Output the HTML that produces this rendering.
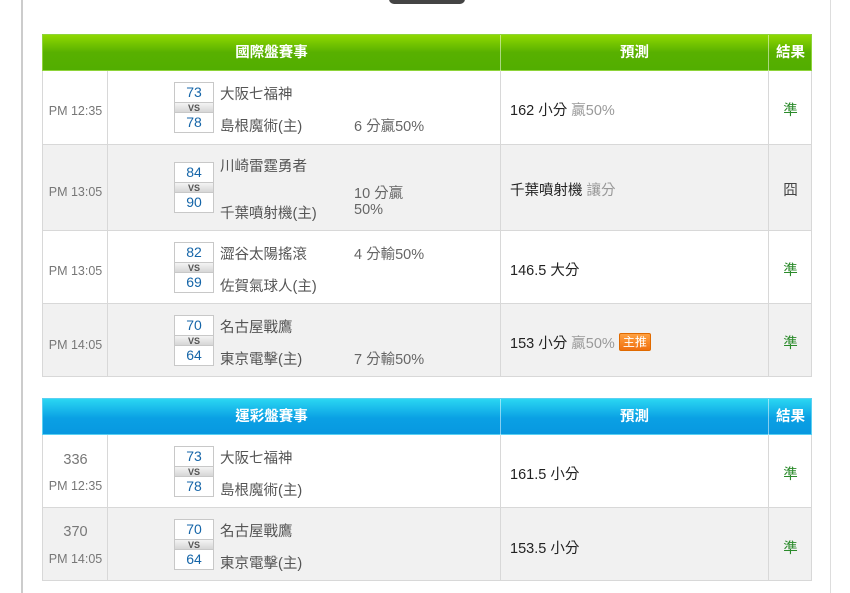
<!DOCTYPE html>
<html><head><meta charset="utf-8"><style>
*{margin:0;padding:0;box-sizing:border-box}
body{width:850px;height:593px;background:#fff;position:relative;overflow:hidden;font-family:"Liberation Sans","Noto Sans CJK TC",sans-serif;color:#555}
.a{position:absolute}
.hd{position:absolute;left:42px;width:770px;height:37px;color:#fff;font-weight:bold;font-size:14.5px}
.hd div{position:absolute;top:0;height:37px;line-height:37px;text-align:center;border-right:1px solid rgba(255,255,255,.5)}
.g{background:linear-gradient(#8fd800,#58b000 50%,#52ae00);border:1px solid #8ed43a}
.b{background:linear-gradient(#2ad6f2,#0aa0e4 55%,#0898e0);border:1px solid #5ad0f2}
.row{position:absolute;left:42px;width:770px;border:1px solid #d8d8d8;border-top:none}
.row>.c{position:absolute;top:0;bottom:0;border-right:1px solid #d8d8d8}
.t{font-size:12.5px;color:#777;text-align:center;width:65px}
.sb{position:absolute;left:131px;width:40px;border:1px solid #c8c8c8;background:#fff}
.sb .n{height:19px;line-height:19px;text-align:center;color:#1565a8;font-size:14px}
.sb .v{height:11px;line-height:11px;text-align:center;font-size:9px;font-weight:bold;color:#555;background:linear-gradient(#f4f4f4,#d6d6d6);border-top:1px solid #c8c8c8;border-bottom:1px solid #c8c8c8}
.nm{position:absolute;left:177px;font-size:14.5px;color:#555;white-space:nowrap}
.hc{position:absolute;left:311px;font-size:14.5px;color:#666;white-space:nowrap}
.pr{position:absolute;left:467px;font-size:14.5px;color:#222;white-space:nowrap}
.pr i{font-style:normal;color:#999}
.rs{position:absolute;left:726px;width:43px;text-align:center;font-size:14.5px}
.ok{color:#2a8a2a}
.tag{display:inline-block;background:linear-gradient(#ffa040,#f07010);color:#fff;font-size:12px;line-height:16px;padding:0 3px;border:1px solid #e06a00;border-radius:2px;vertical-align:2px}
</style></head><body>
<div class="a" style="left:21px;top:0;width:2px;height:593px;background:#ccc"></div>
<div class="a" style="left:830px;top:0;width:1px;height:593px;background:#ddd"></div>
<div class="a" style="left:389px;top:-6px;width:76px;height:10px;background:#444;border-radius:5px"></div>

<div class="hd g" style="top:34px"><div style="left:0;width:458px">國際盤賽事</div><div style="left:458px;width:268px">預測</div><div style="left:726px;width:43px;border:none">結果</div></div>

<div class="row" style="top:71px;height:74px;background:#fff"><div class="c" style="left:0;width:65px"></div><div class="c" style="left:65px;width:393px"></div><div class="c" style="left:458px;width:268px"></div>
<div class="a t" style="left:0;top:33px">PM 12:35</div>
<div class="sb" style="top:11px"><div class="n">73</div><div class="v">VS</div><div class="n">78</div></div>
<div class="nm" style="top:12px">大阪七福神</div><div class="nm" style="top:44px">島根魔術(主)</div><div class="hc" style="top:44px">6 分贏50%</div>
<div class="pr" style="top:28px">162 小分 <i>贏50%</i></div><div class="rs ok" style="top:28px">準</div></div>

<div class="row" style="top:145px;height:86px;background:#f1f1f1"><div class="c" style="left:0;width:65px"></div><div class="c" style="left:65px;width:393px"></div><div class="c" style="left:458px;width:268px"></div>
<div class="a t" style="left:0;top:40px">PM 13:05</div>
<div class="sb" style="top:17px"><div class="n">84</div><div class="v">VS</div><div class="n">90</div></div>
<div class="nm" style="top:10px">川崎雷霆勇者</div><div class="nm" style="top:57px">千葉噴射機(主)</div><div class="hc" style="top:37px">10 分贏</div><div class="hc" style="top:57px">50%</div>
<div class="pr" style="top:34px">千葉噴射機 <i>讓分</i></div><div class="rs" style="top:34px;color:#444">囧</div></div>

<div class="row" style="top:231px;height:73px;background:#fff"><div class="c" style="left:0;width:65px"></div><div class="c" style="left:65px;width:393px"></div><div class="c" style="left:458px;width:268px"></div>
<div class="a t" style="left:0;top:33px">PM 13:05</div>
<div class="sb" style="top:11px"><div class="n">82</div><div class="v">VS</div><div class="n">69</div></div>
<div class="nm" style="top:12px">澀谷太陽搖滾</div><div class="nm" style="top:44px">佐賀氣球人(主)</div><div class="hc" style="top:12px">4 分輸50%</div>
<div class="pr" style="top:28px">146.5 大分</div><div class="rs ok" style="top:28px">準</div></div>

<div class="row" style="top:304px;height:73px;background:#f1f1f1"><div class="c" style="left:0;width:65px"></div><div class="c" style="left:65px;width:393px"></div><div class="c" style="left:458px;width:268px"></div>
<div class="a t" style="left:0;top:34px">PM 14:05</div>
<div class="sb" style="top:11px"><div class="n">70</div><div class="v">VS</div><div class="n">64</div></div>
<div class="nm" style="top:12px">名古屋戰鷹</div><div class="nm" style="top:44px">東京電擊(主)</div><div class="hc" style="top:44px">7 分輸50%</div>
<div class="pr" style="top:28px">153 小分 <i>贏50%</i> <span class="tag">主推</span></div><div class="rs ok" style="top:28px">準</div></div>

<div class="hd b" style="top:398px"><div style="left:0;width:458px">運彩盤賽事</div><div style="left:458px;width:268px">預測</div><div style="left:726px;width:43px;border:none">結果</div></div>

<div class="row" style="top:435px;height:73px;background:#fff"><div class="c" style="left:0;width:65px"></div><div class="c" style="left:65px;width:393px"></div><div class="c" style="left:458px;width:268px"></div>
<div class="a t" style="left:0;top:17px;font-size:14.5px">336</div><div class="a t" style="left:0;top:44px">PM 12:35</div>
<div class="sb" style="top:11px"><div class="n">73</div><div class="v">VS</div><div class="n">78</div></div>
<div class="nm" style="top:12px">大阪七福神</div><div class="nm" style="top:44px">島根魔術(主)</div>
<div class="pr" style="top:28px">161.5 小分</div><div class="rs ok" style="top:28px">準</div></div>

<div class="row" style="top:508px;height:73px;background:#f1f1f1"><div class="c" style="left:0;width:65px"></div><div class="c" style="left:65px;width:393px"></div><div class="c" style="left:458px;width:268px"></div>
<div class="a t" style="left:0;top:16px;font-size:14.5px">370</div><div class="a t" style="left:0;top:44px">PM 14:05</div>
<div class="sb" style="top:11px"><div class="n">70</div><div class="v">VS</div><div class="n">64</div></div>
<div class="nm" style="top:12px">名古屋戰鷹</div><div class="nm" style="top:44px">東京電擊(主)</div>
<div class="pr" style="top:29px">153.5 小分</div><div class="rs ok" style="top:29px">準</div></div>
</body></html>
